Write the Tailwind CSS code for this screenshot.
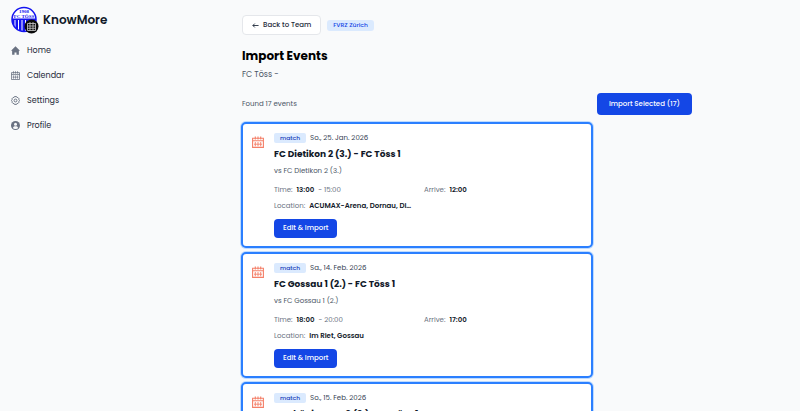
<!DOCTYPE html>
<html lang="en">

<head>
    <meta charset="UTF-8">
    <meta name="viewport" content="width=device-width, initial-scale=1.0">
    <title>KnowMore - Import Events</title>
    <script src="https://cdn.jsdelivr.net/npm/@tailwindcss/browser@4"></script>
</head>

<body class="bg-gray-50 font-[Poppins,Inter,sans-serif] text-[7px] text-gray-900">

    <!-- Shared icons -->
    <svg class="hidden" aria-hidden="true">
        <symbol id="calendar" viewBox="0 0 12 12">
            <path d="M.6 2.200h10.800v9.200H.6zM.6 4.800h10.800" fill="none" stroke="currentColor" stroke-width="1.100" />
            <path d="M3.300.4v3M6 .4v3M8.700.4v3" stroke="currentColor" stroke-width="1.100" />
            <path d="M3.300 6v4.300M6 6v4.300M8.700 6v4.300M2 8.200h8" fill="none" stroke="currentColor" stroke-width=".9" />
        </symbol>
    </svg>

    <div class="flex h-screen overflow-hidden">
        <aside class="w-[134px] shrink-0 px-[11px] pt-[6px]">
            <a href="#" class="flex items-center gap-1 text-[12px] leading-[28px] font-semibold">
                <svg class="size-[28px]" viewBox="0 0 28 28" aria-hidden="true">
                    <defs>
                        <clipPath id="crest">
                            <circle cx="13" cy="13.5" r="12" />
                        </clipPath>
                    </defs>
                    <circle cx="13" cy="13.5" r="12" fill="#fff" />
                    <g clip-path="url(#crest)" fill="#1414f0">
                        <path d="M0 12.500h28v1.500H0zM1 14h2.500v14H1zM4.500 14H7v14H4.500zM8 14h2.500v14H8zM11.500 14H14v14h-2.500zM15 14h2.500v14H15zM18.500 14H21v14h-2.500zM22 14h2.500v14H22z" />
                    </g>
                    <circle cx="13" cy="13.500" r="12" fill="none" stroke="#1414f0" stroke-width="1.500" />
                    <g fill="#1414f0" font-family="Liberation Serif, serif" font-weight="700" text-anchor="middle">
                        <text x="13" y="7" font-size="5">1908</text>
                        <text x="13" y="12" font-size="5">FC TÖSS</text>
                    </g>
                    <circle cx="20.500" cy="20.500" r="7" fill="#0a0a0a" />
                    <path d="M16.500 17.500h8v7h-8zM16.500 20h8M16.500 22.300h8M19 16v8.500M22 16v8.500" fill="none" stroke="#ccc" stroke-width=".8" />
                </svg>
                KnowMore
            </a>
            <nav class="mt-1 text-[8px] text-gray-800">
                <a href="#" class="flex h-[25px] items-center gap-[7px]">
                    <svg class="size-[9px] text-gray-500" viewBox="0 0 12 12" fill="currentColor" aria-hidden="true">
                        <path d="M6 .2 12 6.200H10.500V11.800H7.300V8.500H4.700V11.800H1.500V6.200H0z" />
                    </svg>
                    Home
                </a>
                <a href="#" class="flex h-[25px] items-center gap-[7px]">
                    <svg class="size-[9px] text-gray-500" aria-hidden="true"><use href="#calendar" /></svg>
                    Calendar
                </a>
                <a href="#" class="flex h-[25px] items-center gap-[7px]">
                    <svg class="size-[9px] text-gray-500" viewBox="0 0 12 12" fill="none" stroke="currentColor" stroke-width="1.300" aria-hidden="true">
                        <path d="M4.600.8h2.800l.5 1.100 1.300.1 1.500 1.700-.2 1.200.8 1.100-.8 1.100.2 1.200-1.500 1.700-1.300.1-.5 1.100H4.600l-.5-1.100-1.300-.1-1.500-1.700.2-1.200L.7 6l.8-1.100-.2-1.200L2.800 2l1.300-.1z" />
                        <circle cx="6" cy="6" r="1.900" />
                    </svg>
                    Settings
                </a>
                <a href="#" class="flex h-[25px] items-center gap-[7px]">
                    <svg class="size-[9px]" viewBox="0 0 12 12" aria-hidden="true">
                        <circle cx="6" cy="6" r="6" class="fill-gray-500" />
                        <circle cx="6" cy="4.300" r="2" fill="#f9fafb" />
                        <path d="M2.500 9.300C3 7.500 4.300 7 6 7s3 .5 3.500 2.300C8.500 10.300 7.300 10.600 6 10.600s-2.500-.3-3.500-1.300z" fill="#f9fafb" />
                    </svg>
                    Profile
                </a>
            </nav>
        </aside>

        <main class="min-w-0 flex-1 overflow-hidden">
            <div class="mx-auto max-w-[450px] pt-[15px]">
                <div class="flex items-center gap-[6px]">
                    <button type="button" class="flex h-5 items-center gap-1 rounded-[4px] border border-gray-200 bg-white px-[9px] font-medium text-gray-800">
                        <svg class="size-[7px]" viewBox="0 0 8 8" fill="none" stroke="currentColor" aria-hidden="true">
                            <path d="M7.500 4H1M3.200 1.800 1 4l2.200 2.200" />
                        </svg>
                        Back to Team
                    </button>
                    <span class="rounded-[3px] bg-blue-100 px-[6px] text-[6px] leading-[11px] font-medium text-blue-700">FVRZ Zürich</span>
                </div>

                <h1 class="mt-3 text-[12px] leading-[18px] font-bold text-black">Import Events</h1>
                <p class="mt-1 text-[8px] leading-[12px] text-gray-600">FC Töss -</p>

                <div class="mt-3 flex items-center justify-between">
                    <p class="text-gray-600">Found 17 events</p>
                    <button type="button" class="h-[22px] rounded-[4px] bg-[#1447e6] px-3 font-medium text-white">Import Selected (17)</button>
                </div>

                <div class="-mx-px mt-[7px] flex max-w-[352px] flex-col gap-1">
                    <article class="flex gap-[10px] rounded-[5px] border-2 border-[#2b7fff] bg-white px-2 pt-[9px] pb-2 ring-1 ring-blue-200">
                        <svg class="mt-[3px] ml-px size-[12px] shrink-0 text-[#f47f68]" aria-hidden="true"><use href="#calendar" /></svg>
                        <div class="min-w-0 flex-1">
                            <div class="flex h-[10px] items-center gap-1">
                                <span class="rounded-[2px] bg-blue-100 px-[6px] text-[6px] leading-[10px] font-medium text-blue-800">match</span>
                                <span class="text-gray-700">So., 25. Jan. 2026</span>
                            </div>
                            <h2 class="mt-1 text-[9px] leading-[14px] font-bold">FC Dietikon 2 (3.) - FC Töss 1</h2>
                            <p class="mt-1 leading-[12px] text-gray-600">vs FC Dietikon 2 (3.)</p>
                            <div class="mt-[7px] grid max-w-[294px] grid-cols-2 gap-x-[6px] gap-y-1 leading-[12px] whitespace-nowrap text-gray-500">
                                <p class="flex gap-1">Time: <b class="font-semibold text-gray-900">13:00</b> <span>- 15:00</span></p>
                                <p class="flex gap-1">Arrive: <b class="font-semibold text-gray-900">12:00</b></p>
                                <p class="flex gap-1">Location: <b class="font-semibold text-gray-900">ACUMAX-Arena, Dornau, Di…</b></p>
                            </div>
                            <button type="button" class="mt-[7px] block h-[19px] rounded-[4px] bg-[#1447e6] px-[9px] font-medium text-white">Edit &amp; Import</button>
                        </div>
                    </article>

                    <article class="flex gap-[10px] rounded-[5px] border-2 border-[#2b7fff] bg-white px-2 pt-[9px] pb-2 ring-1 ring-blue-200">
                        <svg class="mt-[3px] ml-px size-[12px] shrink-0 text-[#f47f68]" aria-hidden="true"><use href="#calendar" /></svg>
                        <div class="min-w-0 flex-1">
                            <div class="flex h-[10px] items-center gap-1">
                                <span class="rounded-[2px] bg-blue-100 px-[6px] text-[6px] leading-[10px] font-medium text-blue-800">match</span>
                                <span class="text-gray-700">Sa., 14. Feb. 2026</span>
                            </div>
                            <h2 class="mt-1 text-[9px] leading-[14px] font-bold">FC Gossau 1 (2.) - FC Töss 1</h2>
                            <p class="mt-1 leading-[12px] text-gray-600">vs FC Gossau 1 (2.)</p>
                            <div class="mt-[7px] grid max-w-[294px] grid-cols-2 gap-x-[6px] gap-y-1 leading-[12px] whitespace-nowrap text-gray-500">
                                <p class="flex gap-1">Time: <b class="font-semibold text-gray-900">18:00</b> <span>- 20:00</span></p>
                                <p class="flex gap-1">Arrive: <b class="font-semibold text-gray-900">17:00</b></p>
                                <p class="flex gap-1">Location: <b class="font-semibold text-gray-900">Im Riet, Gossau</b></p>
                            </div>
                            <button type="button" class="mt-[7px] block h-[19px] rounded-[4px] bg-[#1447e6] px-[9px] font-medium text-white">Edit &amp; Import</button>
                        </div>
                    </article>

                    <article class="flex gap-[10px] rounded-[5px] border-2 border-[#2b7fff] bg-white px-2 pt-[9px] pb-2 ring-1 ring-blue-200">
                        <svg class="mt-[3px] ml-px size-[12px] shrink-0 text-[#f47f68]" aria-hidden="true"><use href="#calendar" /></svg>
                        <div class="min-w-0 flex-1">
                            <div class="flex h-[10px] items-center gap-1">
                                <span class="rounded-[2px] bg-blue-100 px-[6px] text-[6px] leading-[10px] font-medium text-blue-800">match</span>
                                <span class="text-gray-700">So., 15. Feb. 2026</span>
                            </div>
                            <h2 class="mt-1 text-[9px] leading-[14px] font-bold">FC Phönix Seen 2 (3.) - FC Töss 1</h2>
                        </div>
                    </article>
                </div>
            </div>
        </main>
    </div>

</body>

</html>
